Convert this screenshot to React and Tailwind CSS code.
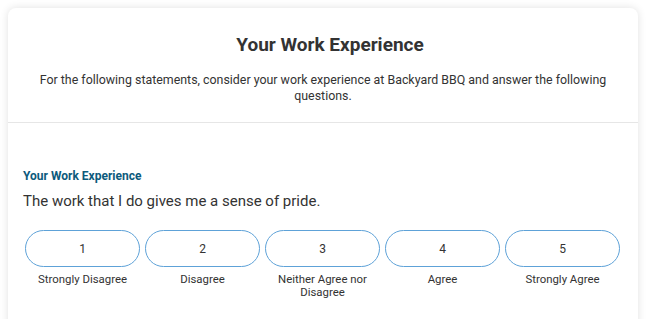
export default function App() {
  const options = [
    { value: 1, label: "Strongly Disagree" },
    { value: 2, label: "Disagree" },
    { value: 3, label: "Neither Agree nor Disagree" },
    { value: 4, label: "Agree" },
    { value: 5, label: "Strongly Agree" },
  ];

  return (
    <div className="bg-white h-[319px] overflow-hidden pt-2 px-2" style={{ fontFamily: "Roboto, 'Liberation Sans', sans-serif" }}>
      <div className="w-[630px] bg-white rounded-lg shadow-[0_0_8px_rgba(0,0,0,0.12)] h-[330px]">
        {/* Header */}
        <div className="border-b border-[#e6e6e6] h-[115px] pt-[26px] px-[26px] text-center">
          <h1 className="pl-[14px] text-[19px] leading-[22px] font-bold text-[#333]">Your Work Experience</h1>
          <p className="mt-[16px] text-[12.4px] leading-[16px] text-[#333]">
            For the following statements, consider your work experience at Backyard BBQ and answer the following questions.
          </p>
        </div>

        {/* Question */}
        <div className="pt-[45px] pl-[17px] pr-[18px]">
          <p className="-ml-[2px] text-[12px] leading-[16px] font-bold text-[#0d5a7c]">Your Work Experience</p>
          <p className="-ml-[2px] mt-[7px] text-[15px] leading-[20px] text-[#333]">The work that I do gives me a sense of pride.</p>
          <div className="mt-[19px] flex gap-[5px]">
            {options.map((o) => (
              <div key={o.value} className="w-[115px] flex flex-col items-center">
                <button className="w-full h-[37px] rounded-full border border-[#5ea2d8] bg-white text-[12px] text-[#333]">
                  {o.value}
                </button>
                <p className="mt-[6px] px-[8px] text-center text-[11.4px] leading-[13px] text-[#333]">{o.label}</p>
              </div>
            ))}
          </div>
        </div>
      </div>
    </div>
  );
}
